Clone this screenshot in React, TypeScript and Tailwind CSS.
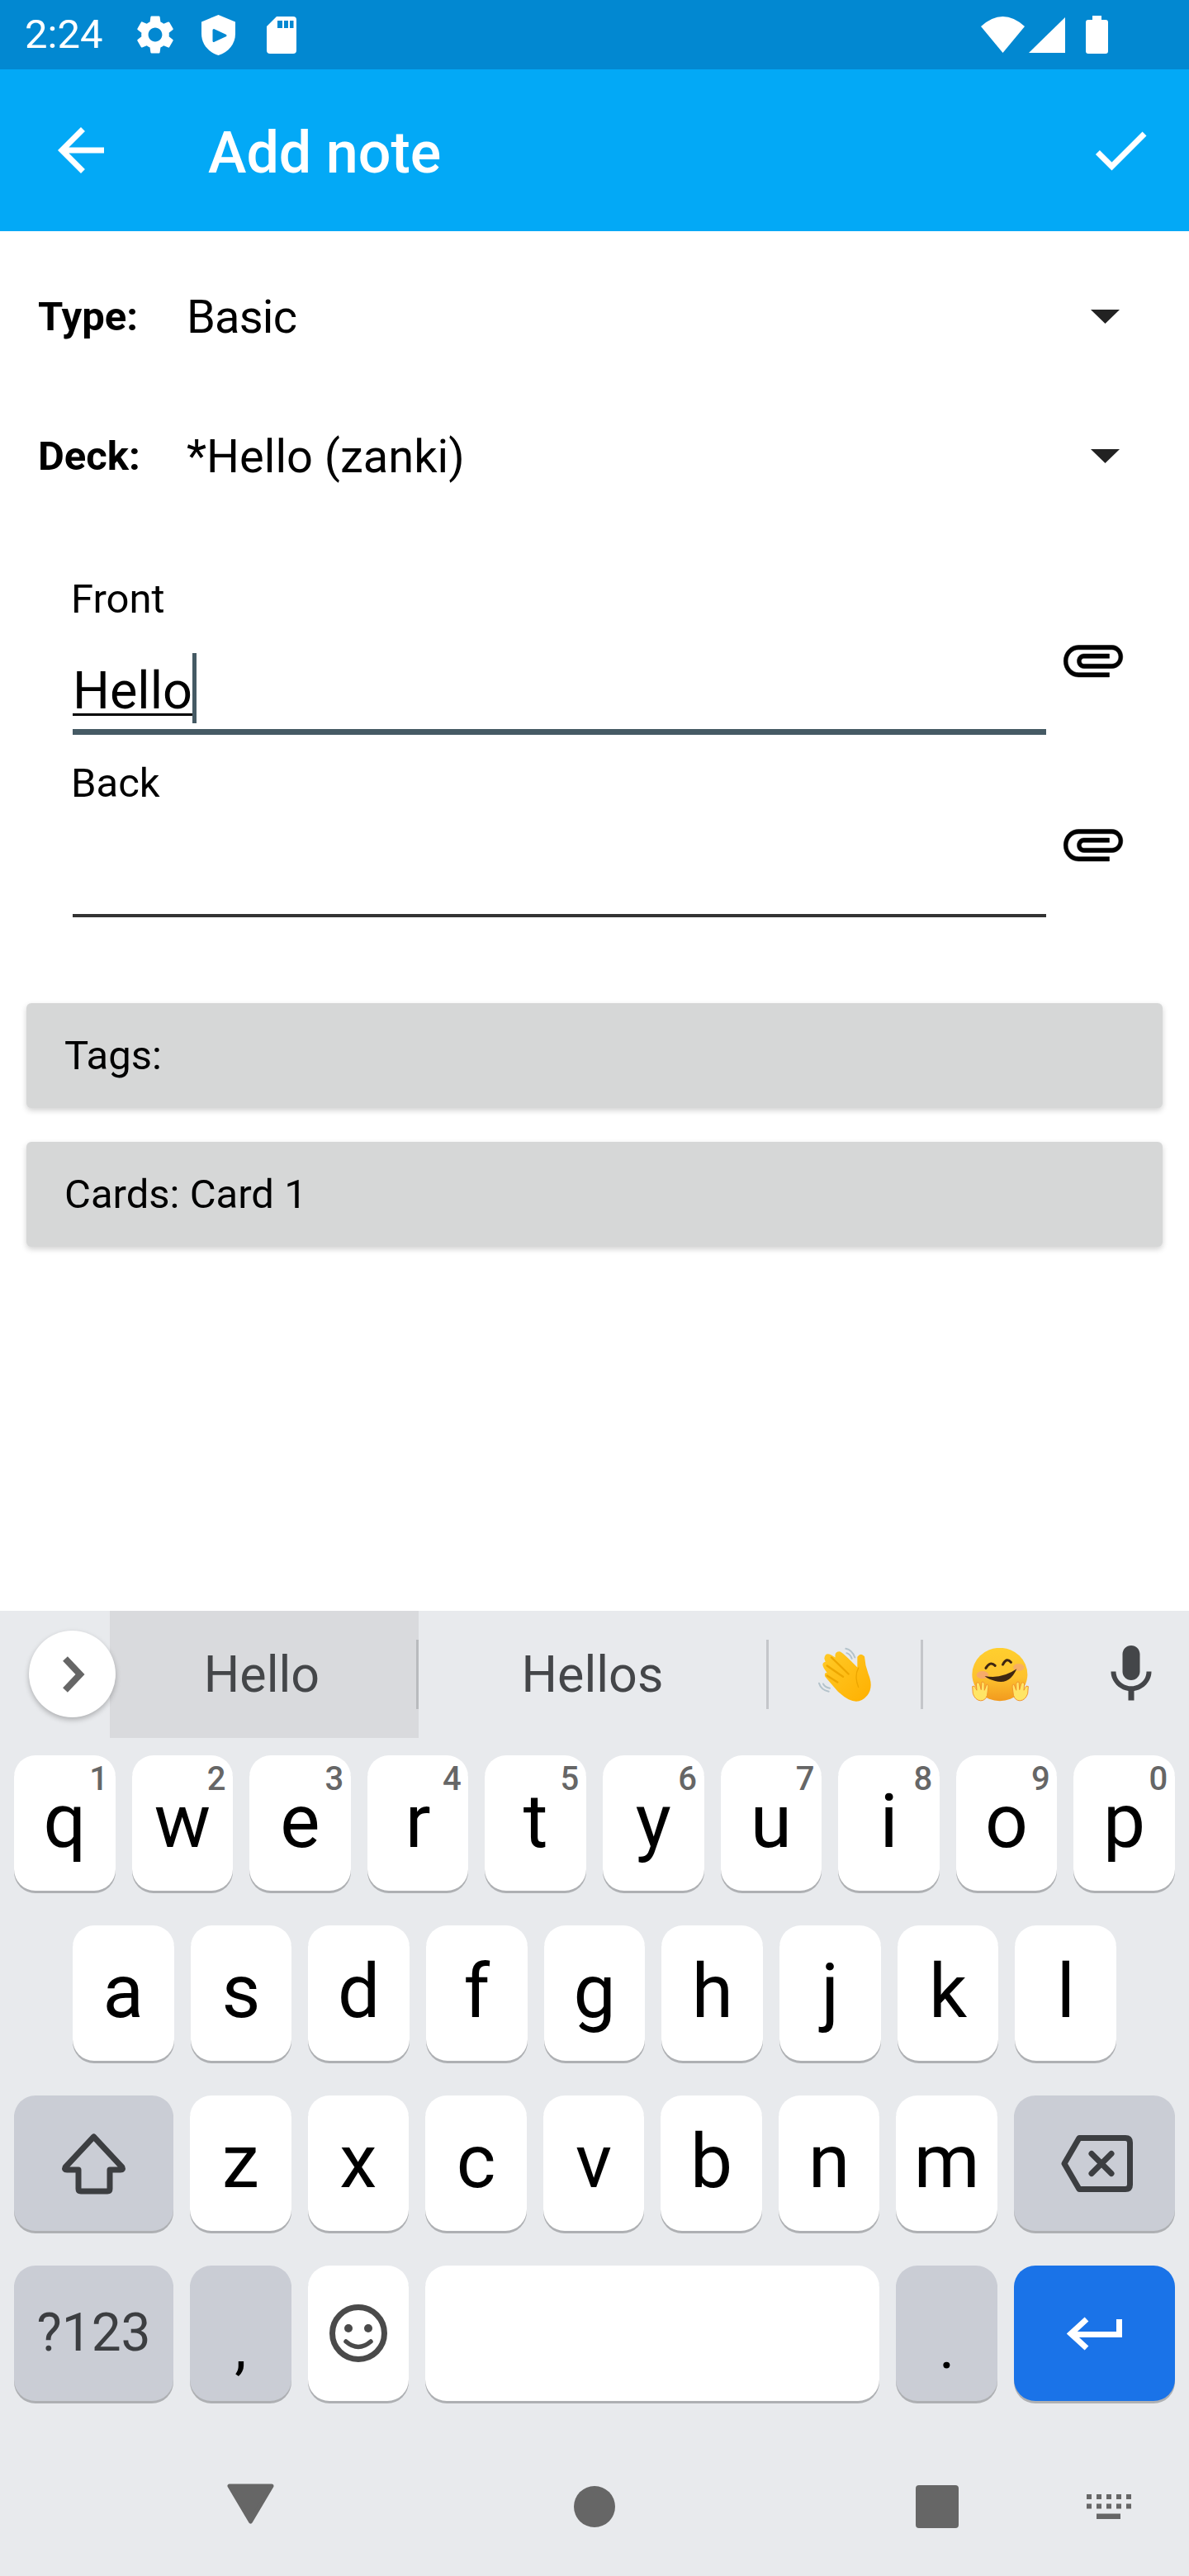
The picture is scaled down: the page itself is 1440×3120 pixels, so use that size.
import React from "react";

const CLIP =
  "M16.5 6v11.5c0 2.21-1.79 4-4 4s-4-1.79-4-4V5c0-1.38 1.12-2.5 2.5-2.5s2.5 1.12 2.5 2.5v10.5c0 .55-.45 1-1 1s-1-.45-1-1V6H10v9.5c0 1.38 1.12 2.5 2.5 2.5s2.5-1.12 2.5-2.5V5c0-2.21-1.79-4-4-4S7 2.79 7 5v12.5c0 3.04 2.46 5.5 5.5 5.5s5.5-2.46 5.5-5.5V6h-1.5z";

function StatusBar() {
  return (
    <div className="flex h-[84px] flex-none items-center bg-[#0288D1] pl-[30px] pr-[98px] text-white">
      <span className="w-[136px] text-[49px] leading-[84px]">2:24</span>
      <svg className="h-[56px] w-[56px] flex-none -mx-[6.5px]" viewBox="0 0 24 24" fill="white">
        <path d="M19.14 12.94c.04-.3.06-.61.06-.94 0-.32-.02-.64-.07-.94l2.03-1.58c.18-.14.23-.41.12-.61l-1.92-3.32c-.12-.22-.37-.29-.59-.22l-2.39.96c-.5-.38-1.03-.7-1.62-.94l-.36-2.54c-.04-.24-.24-.41-.48-.41h-3.84c-.24 0-.43.17-.47.41l-.36 2.54c-.59.24-1.13.57-1.62.94l-2.39-.96c-.22-.08-.47 0-.59.22L2.74 8.87c-.12.21-.08.47.12.61l2.03 1.58c-.05.3-.09.63-.09.94s.02.64.07.94l-2.03 1.58c-.18.14-.23.41-.12.61l1.92 3.32c.12.22.37.29.59.22l2.39-.96c.5.38 1.03.7 1.62.94l.36 2.54c.05.24.24.41.48.41h3.84c.24 0 .44-.17.47-.41l.36-2.54c.59-.24 1.13-.56 1.62-.94l2.39.96c.22.08.47 0 .59-.22l1.92-3.32c.12-.22.07-.47-.12-.61l-2.01-1.58zM12 15.6c-1.98 0-3.6-1.62-3.6-3.6s1.62-3.6 3.6-3.6 3.6 1.62 3.6 3.6-1.62 3.6-3.6 3.6z" />
      </svg>
      <svg className="ml-[35px] h-[49px] w-[41px] flex-none" viewBox="0 0 41 49">
        <path d="M20.5 0L41 8.5V23C41 35 33 45 20.5 49C8 45 0 35 0 23V8.5Z" fill="white" />
        <path d="M15 18.5L29 25L15 31.5Z" fill="#0288D1" stroke="#0288D1" strokeWidth="3" strokeLinejoin="round" />
      </svg>
      <svg className="ml-[38px] h-[45px] w-[36px] flex-none" viewBox="0 0 36 45">
        <path d="M12 0H32a4 4 0 0 1 4 4V41a4 4 0 0 1-4 4H4a4 4 0 0 1-4-4V12Z" fill="white" />
        <rect x="13" y="5" width="6" height="9" fill="#0288D1" />
        <rect x="21" y="5" width="5" height="9" fill="#0288D1" />
        <rect x="28" y="5" width="4.5" height="9" fill="#0288D1" />
      </svg>
      <svg className="ml-auto h-[44px] w-[53px] flex-none" viewBox="0 0 53 44">
        <path d="M0 12Q26.5 -12 53 12L26.5 44Z" fill="white" />
      </svg>
      <svg className="ml-[5px] h-[43px] w-[44px] flex-none" viewBox="0 0 44 43">
        <path d="M44 0V43H0Z" fill="white" />
      </svg>
      <svg className="ml-[25px] h-[46px] w-[27px] flex-none" viewBox="0 0 27 46">
        <path d="M8 0H19V5H24a3 3 0 0 1 3 3V43a3 3 0 0 1-3 3H3a3 3 0 0 1-3-3V8a3 3 0 0 1 3-3H8Z" fill="white" />
      </svg>
    </div>
  );
}

function AppBar() {
  return (
    <div className="flex h-[196px] flex-none items-center bg-[#03A9F6] pl-[56px] pr-[41px] text-white">
      <svg className="h-[84px] w-[84px] flex-none" viewBox="0 0 24 24" fill="white">
        <path d="M20 11H7.83l5.59-5.59L12 4l-8 8 8 8 1.41-1.41L7.83 13H20v-2z" />
      </svg>
      <span className="ml-[112px] pt-[5px] text-[70px] font-medium leading-[84px]">Add note</span>
      <svg className="ml-auto h-[84px] w-[84px] flex-none" viewBox="0 0 24 24" fill="white">
        <path d="M9 16.17L4.83 12l-1.42 1.41L9 19 21 7l-1.41-1.41z" />
      </svg>
    </div>
  );
}

function SelectRow({ label, value, valueClass }: { label: string; value: string; valueClass?: string }) {
  return (
    <div className="flex h-[169px] items-center pl-[46px] pr-[84px]">
      <span className="w-[180px] flex-none text-[49px] font-bold leading-[60px] text-black">{label}</span>
      <span className={"text-[56px] leading-[70px] text-black " + (valueClass ?? "")}>{value}</span>
      <svg className="ml-auto h-[17px] w-[35px] flex-none" viewBox="0 0 35 17">
        <path d="M0 0H35L17.5 17Z" fill="#222222" />
      </svg>
    </div>
  );
}

function Clip() {
  return (
    <svg
      className="ml-[18px] mt-[69px] h-[84px] w-[78px] flex-none"
      viewBox="0 0 24 24"
      preserveAspectRatio="none"
      fill="black"
      stroke="black"
      strokeWidth="0.15"
    >
      <g transform="rotate(90 12 12)">
        <path d={CLIP} />
      </g>
    </svg>
  );
}

function Field({ label, children, boxClass }: { label: string; children?: React.ReactNode; boxClass: string }) {
  return (
    <div className="flex h-[223px] pl-[88px]">
      <div className="w-[1179px] flex-none">
        <div className="-ml-[2px] h-[74px] text-[49px] leading-[76px] text-black">{label}</div>
        <div className={boxClass}>{children}</div>
      </div>
      <Clip />
    </div>
  );
}

function Bar({ text, className }: { text: string; className?: string }) {
  return (
    <div
      className={
        "mx-[32px] flex h-[127px] items-center rounded-[6px] bg-[#D6D7D7] pl-[46px] text-[49px] text-black shadow-[0_3px_7px_rgba(0,0,0,0.18)] " +
        (className ?? "")
      }
    >
      {text}
    </div>
  );
}

function Key({
  children,
  hint,
  className,
}: {
  children?: React.ReactNode;
  hint?: string;
  className?: string;
}) {
  return (
    <div
      className={
        "relative flex h-[164px] items-center justify-center rounded-[26px] shadow-[0_3px_0_#AEB0B3] " +
        (className ?? "flex-1 bg-white")
      }
    >
      {children}
      {hint ? (
        <span className="absolute right-0 top-[7px] w-[40px] text-center text-[40px] font-medium leading-[44px] text-[#666666]">
          {hint}
        </span>
      ) : null}
    </div>
  );
}

function Letter({ c, hint }: { c: string; hint?: string }) {
  return (
    <Key hint={hint}>
      <span className="pb-[4px] text-[91px] leading-[100px] text-black">{c}</span>
    </Key>
  );
}

function WaveEmoji() {
  return (
    <svg className="h-[66px] w-[64px] flex-none" viewBox="30 25 192 197">
      <defs>
        <linearGradient id="waveFill" x1="0" y1="0" x2="1" y2="1">
          <stop offset="0" stopColor="#FFCA28" />
          <stop offset="1" stopColor="#FFB000" />
        </linearGradient>
      </defs>
      <path d="M130 30Q152 34 163 62" fill="none" stroke="#B4C3CB" strokeWidth="6" strokeLinecap="round" />
      <path d="M133 46Q146 50 152 66" fill="none" stroke="#B4C3CB" strokeWidth="6" strokeLinecap="round" />
      <path d="M33 156Q40 180 68 186" fill="none" stroke="#B4C3CB" strokeWidth="6" strokeLinecap="round" />
      <path d="M48 158Q54 170 72 174" fill="none" stroke="#B4C3CB" strokeWidth="6" strokeLinecap="round" />
      <path
        d="M55 132Q50 116 62 118L50 100Q40 82 56 78L52 66Q54 42 76 52L92 62Q88 40 108 40Q118 42 172 98L172 60Q184 42 198 58Q200 90 212 122Q232 170 208 200Q180 234 140 214Q120 204 100 184Z"
        fill="url(#waveFill)"
      />
      <g fill="none" stroke="#EDA600" strokeWidth="7" strokeLinecap="round">
        <path d="M78 62L140 122" />
        <path d="M62 92L120 132" />
        <path d="M62 128L100 152" />
        <path d="M176 100Q160 130 176 170" strokeWidth="4" />
      </g>
    </svg>
  );
}

function HugEmoji() {
  const hand = (
    <g>
      <path
        d="M-32 -18Q-24 -24 -20 -12L-16 -4L-18 -30Q-10 -36 -6 -28L0 -6L2 -34Q10 -38 12 -28L12 -4L20 -26Q28 -26 26 -16L22 14Q16 34 -2 34Q-22 32 -30 8Z"
        fill="#FFE566"
        stroke="#F0932B"
        strokeWidth="3"
        strokeLinejoin="round"
      />
    </g>
  );
  return (
    <svg className="h-[65px] w-[73px] flex-none" viewBox="585 32 220 195">
      <defs>
        <linearGradient id="hugFill" x1="0" y1="0" x2="0" y2="1">
          <stop offset="0" stopColor="#FFCF2E" />
          <stop offset="0.55" stopColor="#FDC22E" />
          <stop offset="1" stopColor="#F29A1E" />
        </linearGradient>
      </defs>
      <ellipse cx="693" cy="128" rx="101" ry="97" fill="url(#hugFill)" />
      <ellipse cx="630" cy="130" rx="22" ry="14" fill="#F4A27E" opacity="0.75" />
      <ellipse cx="762" cy="102" rx="20" ry="13" fill="#F4A27E" opacity="0.65" />
      <path d="M642 105Q658 78 676 96" fill="none" stroke="#3E2612" strokeWidth="9" strokeLinecap="round" />
      <path d="M704 92Q718 64 734 84" fill="none" stroke="#3E2612" strokeWidth="9" strokeLinecap="round" />
      <path d="M638 134Q700 146 755 108Q728 168 676 152Q650 146 638 134Z" fill="#3E2612" />
      <g transform="translate(625 190)">{hand}</g>
      <g transform="translate(765 190) scale(-1 1)">{hand}</g>
    </svg>
  );
}

function Strip() {
  return (
    <div className="flex h-[175px] flex-none items-start">
      <div className="relative z-10 ml-[35px] mt-[24px] flex h-[105px] w-[105px] flex-none items-center justify-center rounded-full bg-white shadow-[0_3px_6px_rgba(0,0,0,0.25)]">
        <svg className="ml-[2px] h-[44px] w-[28px]" viewBox="0 0 28 44">
          <path d="M4 3L22 22L4 41" fill="none" stroke="#666666" strokeWidth="8" />
        </svg>
      </div>
      <div className="relative -ml-[7px] flex h-[154px] w-[374px] flex-none items-center justify-center bg-[#D9DADD] pr-[6px] pt-[2px] text-[61px] text-[#444649]">
        Hello
        <div className="absolute right-0 top-[35px] h-[84px] w-[3px] bg-[#B9BBBE]" />
      </div>
      <div className="flex h-[154px] w-[421px] flex-none items-center justify-center pt-[2px] text-[61px] text-[#444649]">Hellos</div>
      <div className="mt-[35px] h-[84px] w-[3px] flex-none bg-[#C4C6CA]" />
      <div className="flex h-[154px] w-[184px] flex-none items-center justify-center">
        <WaveEmoji />
      </div>
      <div className="mt-[35px] h-[84px] w-[3px] flex-none bg-[#C4C6CA]" />
      <div className="flex h-[154px] w-[186px] flex-none items-center justify-center">
        <HugEmoji />
      </div>
      <div className="flex h-[154px] w-[132px] flex-none items-center justify-center">
        <svg className="h-[84px] w-[84px] flex-none" viewBox="0 0 24 24" fill="#444649">
          <path d="M12 14c1.66 0 3-1.34 3-3V5c0-1.66-1.34-3-3-3S9 3.34 9 5v6c0 1.66 1.34 3 3 3zm5.3-3c0 3-2.54 5.1-5.3 5.1S6.7 14 6.7 11H5c0 3.41 2.72 6.23 6 6.72V21h2v-3.28c3.28-.48 6-3.3 6-6.72h-1.7z" />
        </svg>
      </div>
    </div>
  );
}

function Keyboard() {
  const grey = "bg-[#CACDD5]";
  const top = "qwertyuiop".split("");
  const nums = "1234567890".split("");
  return (
    <div className="flex h-[1169px] flex-none flex-col bg-[#E8EAED]">
      <Strip />
      <div className="flex gap-[20px] px-[17px]">
        {top.map((c, i) => (
          <Letter key={c} c={c} hint={nums[i]} />
        ))}
      </div>
      <div className="mt-[42px] flex gap-[20px] px-[88px]">
        {"asdfghjkl".split("").map((c) => (
          <Letter key={c} c={c} />
        ))}
      </div>
      <div className="mt-[42px] flex gap-[20px] px-[17px]">
        <Key className={"w-[193px] flex-none " + grey}>
          <svg className="h-[76px] w-[79px]" viewBox="0 0 79 76">
            <path
              d="M39.5 6L5 43Q3.5 46 7 46H21V69Q21 72 24 72H56Q59 72 59 69V46H72Q75.5 46 74 43Z"
              fill="none"
              stroke="#3C3E41"
              strokeWidth="7"
              strokeLinejoin="round"
            />
          </svg>
        </Key>
        {"zxcvbnm".split("").map((c) => (
          <Letter key={c} c={c} />
        ))}
        <Key className={"w-[195px] flex-none " + grey}>
          <svg className="ml-[5px] h-[69px] w-[87px]" viewBox="0 0 87 69">
            <path
              d="M4 34.5L22 3.5H78Q83.5 3.5 83.5 9V60Q83.5 65.5 78 65.5H22Z"
              fill="none"
              stroke="#3C3E41"
              strokeWidth="7"
              strokeLinejoin="round"
            />
            <path d="M37 22.5L61 46.5M61 22.5L37 46.5" fill="none" stroke="#3C3E41" strokeWidth="7" strokeLinecap="round" />
          </svg>
        </Key>
      </div>
      <div className="mt-[42px] flex gap-[20px] px-[17px]">
        <Key className={"w-[193px] flex-none " + grey}>
          <span className="text-[64px] leading-[70px] text-[#3C3E41]">?123</span>
        </Key>
        <Key className={"w-[122.6px] flex-none " + grey}>
          <span className="pt-[35px] text-[72px] leading-[80px] text-black">,</span>
        </Key>
        <Key className="w-[122.6px] flex-none bg-white">
          <svg className="h-[70px] w-[70px]" viewBox="0 0 70 70">
            <circle cx="35" cy="35" r="31.5" fill="none" stroke="#4A4A4A" strokeWidth="7" />
            <circle cx="23" cy="29" r="5" fill="#4A4A4A" />
            <circle cx="47" cy="29" r="5" fill="#4A4A4A" />
            <path d="M20 45Q35 58 50 45" fill="none" stroke="#4A4A4A" strokeWidth="5.5" strokeLinecap="round" />
          </svg>
        </Key>
        <Key className="flex-1 bg-white" />
        <Key className={"w-[122.6px] flex-none " + grey}>
          <span className="pt-[35px] text-[72px] leading-[80px] text-black">.</span>
        </Key>
        <Key className="w-[195px] flex-none bg-[#1A73E8]">
          <svg className="h-[41px] w-[67px]" viewBox="0 0 67 41">
            <path d="M63.5 3V21.5H5" fill="none" stroke="white" strokeWidth="7" />
            <path d="M24 3L5 20.5L24 38" fill="none" stroke="white" strokeWidth="7" />
          </svg>
        </Key>
      </div>
      <div className="mt-[100px] flex items-start pl-[275px]">
        <svg className="h-[49px] w-[57px] flex-none" viewBox="0 0 57 49">
          <path d="M3 3H54L28.5 46Z" fill="#666666" stroke="#666666" strokeWidth="5" strokeLinejoin="round" />
        </svg>
        <div className="ml-[363px] mt-[3px] h-[50px] w-[50px] flex-none rounded-full bg-[#666666]" />
        <div className="ml-[364px] mt-[2px] h-[52px] w-[52px] flex-none rounded-[4px] bg-[#666666]" />
        <svg className="ml-[155px] mt-[13px] h-[30px] w-[54px] flex-none" viewBox="0 0 54 30" fill="#666666">
          {[0, 12, 24, 36, 48].map((x) => (
            <rect key={"a" + x} x={x} y="0" width="6" height="6" />
          ))}
          {[0, 12, 24, 36, 48].map((x) => (
            <rect key={"b" + x} x={x} y="11.5" width="6" height="6" />
          ))}
          <rect x="12" y="23.5" width="29" height="6.5" />
        </svg>
      </div>
    </div>
  );
}

export default function App() {
  return (
    <div className="flex h-[3120px] w-[1440px] flex-col overflow-hidden bg-white font-['Roboto',sans-serif]">
      <StatusBar />
      <AppBar />
      <div className="flex-1 pt-[19px]">
        <SelectRow label="Type:" value="Basic" valueClass="tracking-[-0.8px]" />
        <SelectRow label="Deck:" value="*Hello (zanki)" />
        <div className="mt-[51px]">
          <Field label="Front" boxClass="flex h-[128px] items-end border-b-[7px] border-[#455A64] pb-[9px]">
            <span className="text-[63px] leading-[74px] text-black underline decoration-[3px] underline-offset-[6px]">Hello</span>
            <span className="-mb-[2px] h-[85px] w-[5px] flex-none bg-[#455A64]" />
          </Field>
          <Field label="Back" boxClass="h-[126px] border-b-[4px] border-[#333333]" />
        </div>
        <Bar text="Tags:" className="mt-[81px]" />
        <Bar text="Cards: Card 1" className="mt-[41px]" />
      </div>
      <Keyboard />
    </div>
  );
}
